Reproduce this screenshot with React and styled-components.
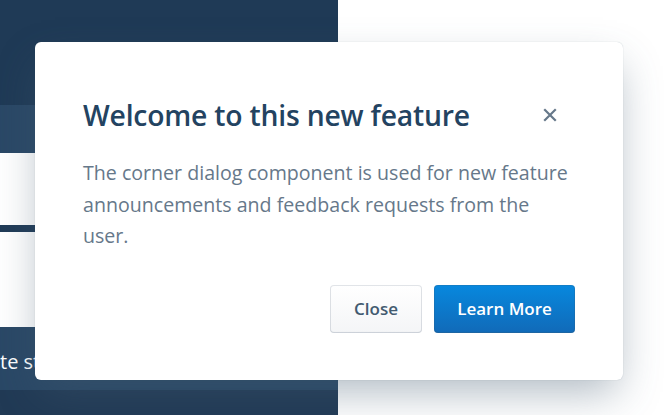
import React from "react";
import styled, { createGlobalStyle } from "styled-components";

const Global = createGlobalStyle`
  html, body { margin: 0; padding: 0; }
  body { background: #ffffff; font-family: "Open Sans", "Noto Sans", sans-serif; }
  #root { width: 664px; height: 415px; overflow: hidden; }
`;

const Page = styled.div`
  position: relative;
  display: flex;
  width: 664px;
  height: 415px;
  overflow: hidden;
`;

const Sidebar = styled.div`
  width: 338px;
  display: flex;
  flex-direction: column;
  background: #203b57;
`;

const Band = styled.div`
  height: ${(p) => p.$h}px;
  flex-shrink: 0;
  background: ${(p) => p.$bg};
  display: flex;
  align-items: center;
`;

const BandText = styled.span`
  color: #ffffff;
  font-size: 20px;
  white-space: nowrap;
  padding-top: 6px;
`;

const Main = styled.div`
  flex: 1;
  background: #ffffff;
`;

const Dialog = styled.div`
  position: absolute;
  left: 35px;
  top: 42px;
  width: 588px;
  height: 338px;
  box-sizing: border-box;
  padding: 57px 48px 0 48px;
  background: #ffffff;
  border-radius: 6px;
  box-shadow: 0 0 1px rgba(67, 90, 111, 0.35),
    0 18px 40px -6px rgba(67, 90, 111, 0.42);
  display: flex;
  flex-direction: column;
`;

const Header = styled.div`
  display: flex;
  align-items: center;
  justify-content: space-between;
`;

const Title = styled.h2`
  margin: 0;
  font-size: 28.3px;
  line-height: 32px;
  font-weight: 600;
  color: #234361;
  letter-spacing: -0.2px;
`;

const CloseIcon = styled.button`
  border: none;
  background: transparent;
  padding: 0;
  width: 20px;
  height: 20px;
  margin-right: 15px;
  display: flex;
  align-items: center;
  justify-content: center;
  cursor: pointer;
`;

const Body = styled.p`
  margin: 26px 0 0 0;
  font-size: 19.6px;
  line-height: 31.5px;
  color: #66788a;
`;

const Footer = styled.div`
  margin-top: 33px;
  display: flex;
  justify-content: flex-end;
  gap: 12px;
`;

const Button = styled.button`
  height: 48px;
  box-sizing: border-box;
  border: none;
  border-radius: 4px;
  padding: 0;
  font-family: "Open Sans", "Noto Sans", sans-serif;
  font-size: 17px;
  font-weight: 600;
  cursor: pointer;
  color: ${(p) => (p.$primary ? "#ffffff" : "#425a70")};
  background: ${(p) =>
    p.$primary
      ? "linear-gradient(to bottom, #0788de, #116ab8)"
      : "linear-gradient(to bottom, #ffffff, #f4f5f7)"};
  box-shadow: ${(p) =>
    p.$primary
      ? "inset 0 0 0 1px rgba(67, 90, 111, 0.2), inset 0 -1px 1px 0 rgba(67, 90, 111, 0.1)"
      : "inset 0 0 0 1px rgba(67, 90, 111, 0.16), inset 0 -1px 1px 0 rgba(67, 90, 111, 0.08)"};
  width: ${(p) => p.$w}px;
`;

export default function App() {
  return (
    <Page>
      <Global />
      <Sidebar>
        <Band $h={105} $bg="#1f3a56" />
        <Band $h={48} $bg="#2a4866" />
        <Band $h={72} $bg="linear-gradient(to right, #ffffff 60%, #eef0f3)" />
        <Band $h={7} $bg="#203b57" />
        <Band $h={95} $bg="linear-gradient(to right, #ffffff 60%, #eef0f3)" />
        <Band $h={63} $bg="#2a4866">
          <BandText>te steps</BandText>
        </Band>
        <Band $h={25} $bg="#213a55" />
      </Sidebar>
      <Main />
      <Dialog>
        <Header>
          <Title>Welcome to this new feature</Title>
          <CloseIcon aria-label="Close">
            <svg width="14" height="14" viewBox="0 0 14 14">
              <path
                d="M2 2 L12 12 M12 2 L2 12"
                stroke="#66788a"
                strokeWidth="2.2"
                strokeLinecap="square"
                fill="none"
              />
            </svg>
          </CloseIcon>
        </Header>
        <Body>
          The corner dialog component is used for new feature announcements
          and feedback requests from the user.
        </Body>
        <Footer>
          <Button $w={92}>Close</Button>
          <Button $primary $w={141}>Learn More</Button>
        </Footer>
      </Dialog>
    </Page>
  );
}
